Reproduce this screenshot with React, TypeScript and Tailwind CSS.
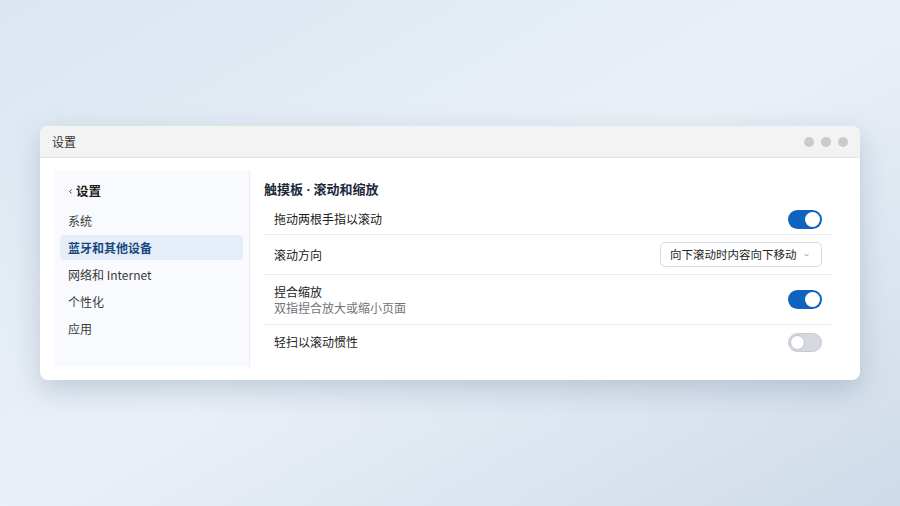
import { ChevronLeft } from "lucide-react";

const font = { fontFamily: '"Noto Sans CJK SC", "Noto Sans", sans-serif' };

const navItems = ["系统", "蓝牙和其他设备", "网络和 Internet", "个性化", "应用"];

function Toggle({ on }: { on: boolean }) {
  return on ? (
    <div className="w-[34px] h-[19px] rounded-full bg-[#0c64bf] flex items-center justify-end pr-[2px]">
      <div className="w-[15px] h-[15px] rounded-full bg-white" />
    </div>
  ) : (
    <div className="w-[34px] h-[19px] rounded-full bg-[#d5dae0] border border-[#c4cad1] flex items-center pl-[1px]">
      <div className="w-[15px] h-[15px] rounded-full bg-white border border-[#b9c0c8]" />
    </div>
  );
}

export default function App() {
  return (
    <div
      style={font}
      className="w-[900px] h-[506px] flex items-center justify-center bg-gradient-to-br from-[#dbe6f1] via-[#eaf0f7] to-[#cfdbe9]"
    >
      <div className="w-[820px] h-[254px] rounded-[8px] bg-white overflow-hidden shadow-[0_10px_28px_rgba(90,110,140,0.28)] flex flex-col">
        {/* title bar */}
        <div className="h-[32px] shrink-0 bg-[#f3f3f3] border-b border-[#e2e4e8] flex items-center justify-between pl-[12px] pr-[12px]">
          <span className="text-[12px] text-[#333]">设置</span>
          <div className="flex gap-[7px]">
            <div className="w-[10px] h-[10px] rounded-full bg-[#cbcbcb]" />
            <div className="w-[10px] h-[10px] rounded-full bg-[#cbcbcb]" />
            <div className="w-[10px] h-[10px] rounded-full bg-[#cbcbcb]" />
          </div>
        </div>

        {/* body */}
        <div className="flex-1 flex pl-[14px] pt-[12px] pb-[13px]">
          <aside className="w-[196px] bg-[#f8fafd] border-r border-[#eceef2] px-[6px] pt-[9px] flex flex-col">
            <div className="h-[25px] flex items-center pl-[7px] mb-[4px] text-[12.5px] font-bold text-[#1b1b1b]">
              <ChevronLeft className="w-[7px] h-[7px] mr-[2px]" strokeWidth={3} />
              设置
            </div>
            <div className="flex flex-col gap-[2px]">
              {navItems.map((item, i) => (
                <div
                  key={item}
                  className={
                    i === 1
                      ? "h-[25px] rounded-[4px] bg-[#e4edf8] flex items-center pl-[8px] text-[12px] font-bold text-[#17497f]"
                      : "h-[25px] flex items-center pl-[8px] text-[12px] text-[#3a3a3a]"
                  }
                >
                  {item}
                </div>
              ))}
            </div>
          </aside>

          <main className="flex-1 pl-[14px] pr-[29px] pt-[9px]">
            <h2 className="h-[20px] leading-[20px] text-[13px] font-bold text-[#1c2a3a]">
              触摸板<span className="font-['Noto_Sans']"> · </span>滚动和缩放
            </h2>
            <div className="mt-[5px] flex flex-col text-[12px] text-[#222]">
              <div className="h-[31px] border-b border-[#e9ecef] flex items-center justify-between pl-[10px] pr-[9px]">
                <span>拖动两根手指以滚动</span>
                <Toggle on />
              </div>
              <div className="h-[40px] border-b border-[#e9ecef] flex items-center justify-between pl-[10px] pr-[9px]">
                <span>滚动方向</span>
                <div className="h-[25px] w-[162px] rounded-[5px] border border-[#d6dae0] bg-white flex items-center justify-between pl-[9px] pr-[12px] text-[11.5px] text-[#222]">
                  <span>向下滚动时内容向下移动</span>
                  <svg width="5" height="4" viewBox="0 0 5 4" className="mt-[1px]">
                    <path d="M0.5 1 L2.5 3 L4.5 1" fill="none" stroke="#9a9a9a" strokeWidth="1" />
                  </svg>
                </div>
              </div>
              <div className="h-[50px] border-b border-[#e9ecef] flex items-center justify-between pl-[10px] pr-[9px]">
                <div className="flex flex-col leading-[16px]">
                  <span>捏合缩放</span>
                  <span className="text-[#6f747a]">双指捏合放大或缩小页面</span>
                </div>
                <Toggle on />
              </div>
              <div className="h-[34px] flex items-center justify-between pl-[10px] pr-[9px]">
                <span>轻扫以滚动惯性</span>
                <Toggle on={false} />
              </div>
            </div>
          </main>
        </div>
      </div>
    </div>
  );
}
